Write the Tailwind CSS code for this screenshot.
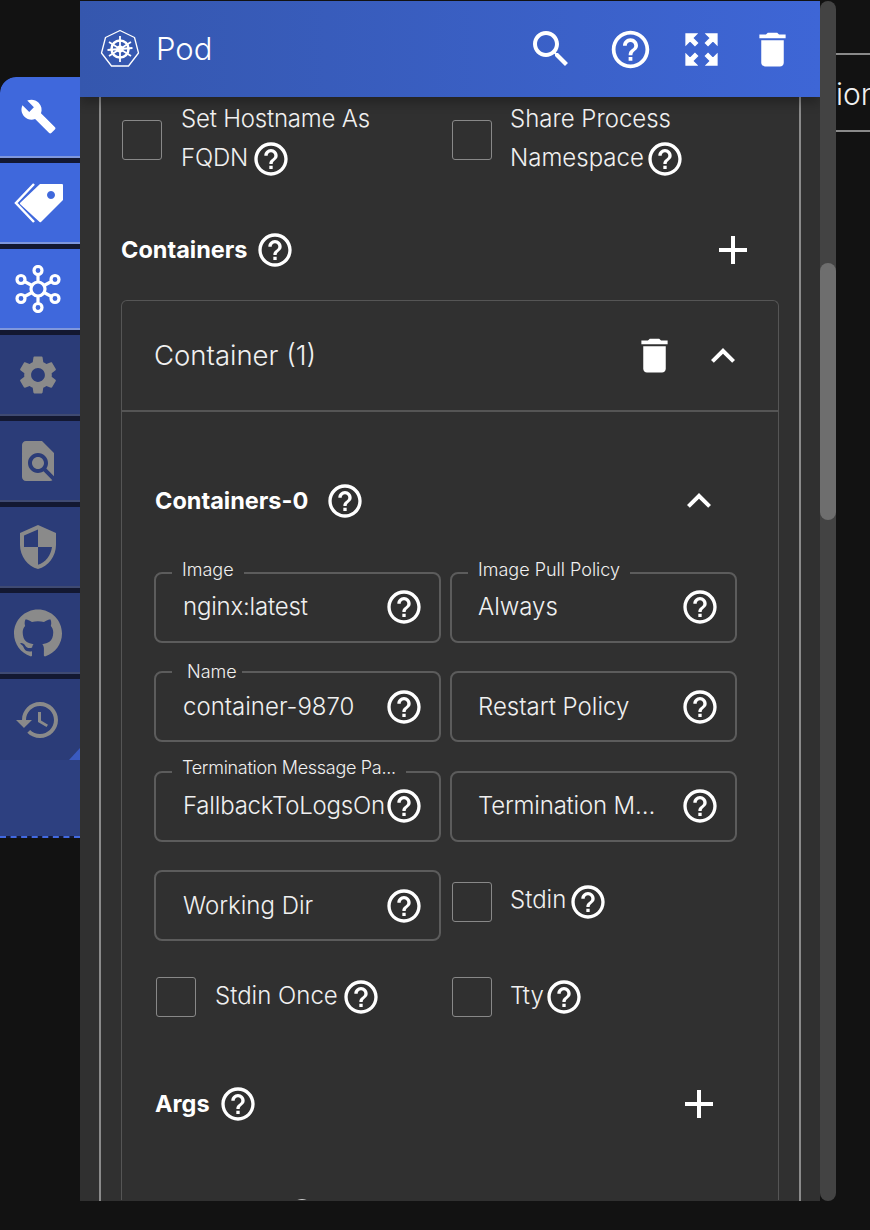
<!DOCTYPE html>
<html lang="en">
<head>
    <meta charset="UTF-8">
    <title>Pod</title>
    <script src="https://cdn.jsdelivr.net/npm/@tailwindcss/browser@4"></script>
</head>
<body class="bg-[#121212] font-['Inter',sans-serif] text-[#f0f0f0] overflow-hidden">
    <!-- shared icons -->
    <svg class="hidden" aria-hidden="true">
        <symbol id="i-help" viewBox="0 0 24 24"><path d="M11 18h2v-2h-2v2zm1-16C6.48 2 2 6.48 2 12s4.48 10 10 10 10-4.48 10-10S17.52 2 12 2zm0 18c-4.41 0-8-3.59-8-8s3.59-8 8-8 8 3.59 8 8-3.59 8-8 8zm0-14c-2.21 0-4 1.79-4 4h2c0-1.1.9-2 2-2s2 .9 2 2c0 2-3 1.75-3 5h2c0-2.25 3-2.5 3-5 0-2.21-1.79-4-4-4z"/></symbol>
        <symbol id="i-trash" viewBox="0 0 24 24"><path d="M6 19c0 1.1.9 2 2 2h8c1.1 0 2-.9 2-2V7H6v12zM19 4h-3.5l-1-1h-5l-1 1H5v2h14V4z"/></symbol>
        <symbol id="i-plus" viewBox="0 0 24 24"><path d="M19 13h-6v6h-2v-6H5v-2h6V5h2v6h6v2z"/></symbol>
        <symbol id="i-up" viewBox="0 0 24 24"><path d="M12 8l-6 6 1.41 1.41L12 10.83l4.59 4.58L18 14z"/></symbol>
    </svg>

    <div class="flex h-[1230px] w-[870px]">
        <!-- Side tabs -->
        <nav class="w-[80px] shrink-0 mt-[77px] h-[761px] flex flex-col bg-[#131831] rounded-tl-[16px] overflow-hidden border-b-2 border-dashed border-[#4169e1]">
            <div class="h-[81px] mb-[5px] bg-[#3f68dc] border-b-2 border-[#7f97dc] flex items-center justify-center pr-[4px] rounded-tl-[16px]">
                <svg class="w-[37px] h-[37px] fill-white" viewBox="0 0 24 24"><path d="M22.7 19l-9.1-9.1c.9-2.3.4-5-1.5-6.9-2-2-5-2.4-7.4-1.3L9 6 6 9 1.6 4.7C.4 7.1.9 10.1 2.9 12.1c1.9 1.9 4.6 2.4 6.9 1.5l9.1 9.1c.4.4 1 .4 1.4 0l2.3-2.3c.5-.4.5-1.1.1-1.4z"/></svg>
            </div>
            <div class="h-[81px] mb-[5px] bg-[#3f68dc] border-b-2 border-[#7f97dc] flex items-center justify-center pr-[2px]">
                <svg class="w-[50px] h-[40px]" viewBox="0 0 50 40"><path fill="#fff" fill-rule="evenodd" d="M26 1H48a1 1 0 0 1 1 1V17L27 39a1 1 0 0 1-1.400 0L6 21V20zM37 8a4 4 0 1 0 .01 0z"/><path fill="none" stroke="#fff" stroke-width="2.500" d="M20 1L2 20L20 39"/></svg>
            </div>
            <div class="h-[81px] mb-[5px] bg-[#3f68dc] border-b-2 border-[#7f97dc] flex items-center justify-center pr-[4px]">
                <svg class="w-[46px] h-[48px]" viewBox="0 0 46 48" fill="none" stroke="#fff" stroke-width="3.200"><circle cx="23" cy="24" r="7"/><circle cx="23" cy="5.500" r="4"/><circle cx="23" cy="42.500" r="4"/><circle cx="6" cy="14.500" r="4"/><circle cx="40" cy="14.500" r="4"/><circle cx="6" cy="33.500" r="4"/><circle cx="40" cy="33.500" r="4"/><path d="M23 9.500V17M23 31v7.500M9.500 16.500L17 20.500M36.500 16.500L29 20.500M9.500 31.500L17 27.500M36.500 31.500L29 27.500"/></svg>
            </div>
            <div class="h-[81px] mb-[5px] bg-[#2b3c78] border-b-2 border-[#3f4a72] flex items-center justify-center pr-[4px]">
                <svg class="w-[46px] h-[46px] fill-[#8a8a8a]" viewBox="0 0 24 24"><path d="M19.140 12.940c.04-.3.06-.61.06-.94 0-.32-.02-.64-.07-.94l2.030-1.580c.18-.14.23-.41.12-.61l-1.920-3.320c-.12-.22-.37-.29-.59-.22l-2.390.96c-.5-.38-1.030-.7-1.620-.94l-.36-2.540c-.04-.24-.24-.41-.48-.41h-3.840c-.24 0-.43.17-.47.41l-.36 2.540c-.59.24-1.130.57-1.620.94l-2.390-.96c-.22-.08-.47 0-.59.22L2.740 8.870c-.12.21-.08.47.12.61l2.030 1.580c-.05.3-.09.63-.09.94s.02.64.07.94l-2.030 1.580c-.18.14-.23.41-.12.61l1.920 3.320c.12.22.37.29.59.22l2.390-.96c.5.38 1.030.7 1.620.94l.36 2.540c.05.24.24.41.48.41h3.840c.24 0 .44-.17.47-.41l.36-2.540c.59-.24 1.130-.56 1.620-.94l2.390.96c.22.08.47 0 .59-.22l1.920-3.320c.12-.22.07-.47-.12-.61l-2.010-1.580zM12 15.600c-1.980 0-3.600-1.620-3.600-3.600s1.620-3.600 3.600-3.600 3.600 1.620 3.600 3.600-1.620 3.600-3.600 3.600z"/></svg>
            </div>
            <div class="h-[81px] mb-[5px] bg-[#2b3c78] border-b-2 border-[#3f4a72] flex items-center justify-center pr-[4px]">
                <svg class="w-[48px] h-[48px] fill-[#8a8a8a]" viewBox="0 0 24 24"><path d="M20 19.590V8l-6-6H6c-1.100 0-1.990.9-1.990 2L4 20c0 1.100.89 2 1.990 2H18c.45 0 .85-.15 1.190-.4l-4.430-4.430c-.8.52-1.740.83-2.760.83-2.760 0-5-2.240-5-5s2.240-5 5-5 5 2.240 5 5c0 1.020-.31 1.960-.83 2.750L20 19.590zM9 13c0 1.660 1.340 3 3 3s3-1.340 3-3-1.340-3-3-3-3 1.340-3 3z"/></svg>
            </div>
            <div class="h-[81px] mb-[5px] bg-[#2b3c78] border-b-2 border-[#3f4a72] flex items-center justify-center pr-[4px]">
                <svg class="w-[48px] h-[48px] fill-[#8a8a8a]" viewBox="0 0 24 24"><path d="M12 1L3 5v6c0 5.550 3.840 10.740 9 12 5.160-1.260 9-6.450 9-12V5l-9-4zm0 10.990h7c-.53 4.120-3.280 7.790-7 8.940V12H5V6.300l7-3.110v8.800z"/></svg>
            </div>
            <div class="h-[81px] mb-[5px] bg-[#2b3c78] border-b-2 border-[#3f4a72] flex items-center justify-center pr-[4px]">
                <svg class="w-[48px] h-[48px] fill-[#8a8a8a]" viewBox="0 0 24 24"><path d="M12 .297c-6.630 0-12 5.373-12 12 0 5.303 3.438 9.800 8.205 11.385.6.113.82-.258.82-.577 0-.285-.01-1.040-.015-2.040-3.338.724-4.042-1.610-4.042-1.610C4.422 18.070 3.633 17.700 3.633 17.700c-1.087-.744.084-.729.084-.729 1.205.084 1.838 1.236 1.838 1.236 1.070 1.835 2.809 1.305 3.495.998.108-.776.417-1.305.76-1.605-2.665-.3-5.466-1.332-5.466-5.930 0-1.310.465-2.380 1.235-3.220-.135-.303-.54-1.523.105-3.176 0 0 1.005-.322 3.300 1.230.96-.267 1.980-.399 3-.405 1.020.006 2.040.138 3 .405 2.280-1.552 3.285-1.230 3.285-1.230.645 1.653.24 2.873.12 3.176.765.84 1.230 1.910 1.230 3.220 0 4.610-2.805 5.625-5.475 5.920.42.36.81 1.096.81 2.220 0 1.606-.015 2.896-.015 3.286 0 .315.21.69.825.57C20.565 22.092 24 17.592 24 12.297c0-6.627-5.373-12-12-12"/></svg>
            </div>
            <div class="relative h-[81px] bg-[#2b3c78] flex items-center justify-center pr-[4px]">
                <svg class="w-[48px] h-[48px] fill-[#8a8a8a]" viewBox="0 0 24 24"><path d="M13 3c-4.970 0-9 4.030-9 9H1l3.890 3.890.07.14L9 12H6c0-3.870 3.130-7 7-7s7 3.130 7 7-3.130 7-7 7c-1.930 0-3.680-.79-4.940-2.060l-1.420 1.420C8.270 19.990 10.510 21 13 21c4.970 0 9-4.030 9-9s-4.030-9-9-9zm-1 5v5l4.280 2.540.72-1.210-3.500-2.080V8H12z"/></svg>
                <span class="absolute right-0 bottom-0 w-[11px] h-[12px] bg-[#3a5ac0] [clip-path:polygon(100%_0,100%_100%,0_100%)]"></span>
            </div>
            <div class="flex-1 bg-[#2d4080]"></div>
        </nav>

        <!-- Panel -->
        <div class="relative w-[740px] shrink-0 mt-px h-[1200px] bg-[#303030] overflow-hidden">
            <header class="relative z-10 h-[96px] flex items-center pl-[20px] pr-[25px] bg-gradient-to-r from-[#3557ae] to-[#3e66d6] shadow-[0_6px_10px_rgba(0,0,0,0.25)]">
                <svg class="w-[40px] h-[40px]" viewBox="0 0 40 40" fill="none" stroke="#fff">
                    <path stroke-width="1.300" stroke-linejoin="round" d="M20 1.500L34.500 8.500L38.500 24L28.500 37H11.500L1.500 24L5.500 8.500z"/>
                    <circle cx="20" cy="20" r="8.500" stroke-width="2.500"/>
                    <circle cx="20" cy="20" r="2.500" stroke-width="2"/>
                    <path stroke-width="1.800" d="M20 7V33M9 13L31 27M31 13L9 27M7.500 21L32.500 19"/>
                </svg>
                <span class="ml-[16px] text-[31px] font-light text-white">Pod</span>
                <div class="ml-auto flex items-center">
                    <svg class="w-[48px] h-[48px] fill-white" viewBox="0 0 24 24"><path d="M15.500 14h-.79l-.28-.27C15.410 12.590 16 11.110 16 9.500 16 5.910 13.090 3 9.500 3S3 5.910 3 9.500 5.910 16 9.500 16c1.610 0 3.090-.59 4.230-1.570l.27.28v.79l5 4.990L20.490 19l-4.990-5zm-6 0C7.010 14 5 11.990 5 9.500S7.010 5 9.500 5 14 7.010 14 9.500 11.990 14 9.500 14z"/></svg>
                    <svg class="w-[45px] h-[45px] fill-white ml-[33px]"><use href="#i-help"/></svg>
                    <svg class="w-[41px] h-[41px] fill-white stroke-white stroke-[0.9] ml-[28px]" viewBox="0 0 24 24"><path d="M15 3l2.300 2.300-2.890 2.870 1.420 1.420L18.700 6.700 21 9V3h-6zM3 9l2.300-2.300 2.870 2.890 1.420-1.420L6.700 5.300 9 3H3v6zm6 12l-2.300-2.300 2.890-2.870-1.420-1.420L5.300 17.300 3 15v6h6zm12-6l-2.300 2.300-2.870-2.890-1.420 1.420 2.890 2.870L15 21h6v-6z"/></svg>
                    <svg class="w-[45px] h-[45px] fill-white ml-[28px]"><use href="#i-trash"/></svg>
                </div>
            </header>

            <main class="mx-[19px] border-x-2 border-[#8a8a8a] px-[20px] h-[1104px] overflow-hidden">
                <div class="flex h-[84px] items-center">
                    <div class="flex items-center w-[330px] pl-px">
                        <span class="w-[40px] h-[40px] mt-[1px] border border-[#888] rounded-[3px]"></span>
                        <div class="ml-[19px] mt-[-2px] text-[24px] tracking-[-0.2px] font-light leading-[39px]">
                            <div>Set Hostname As</div>
                            <div class="flex items-center h-[39px]">FQDN<svg class="w-[40px] h-[40px] fill-white ml-[3px] mt-[2px]"><use href="#i-help"/></svg></div>
                        </div>
                    </div>
                    <div class="flex items-center pl-px">
                        <span class="w-[40px] h-[40px] mt-[1px] border border-[#888] rounded-[3px]"></span>
                        <div class="ml-[18px] mt-[-2px] text-[24px] font-light leading-[39px]">
                            <div>Share Process</div>
                            <div class="flex items-center h-[39px]">Namespace<svg class="w-[40px] h-[40px] fill-white ml-[1px] mt-[2px]"><use href="#i-help"/></svg></div>
                        </div>
                    </div>
                </div>

                <div class="flex items-center h-[48px] mt-[45px] pr-[22px]">
                    <span class="text-[23.5px] font-bold text-white">Containers</span>
                    <svg class="w-[40px] h-[40px] fill-white ml-[7px]"><use href="#i-help"/></svg>
                    <svg class="w-[48px] h-[48px] fill-white ml-auto"><use href="#i-plus"/></svg>
                </div>

                <section class="mt-[26px] border border-[#555] rounded-t-[6px] border-b-0 h-[900px] overflow-hidden">
                    <div class="h-[111px] border-b-2 border-[#555] flex items-center pl-[32px] pr-[31px]">
                        <span class="mt-px text-[27.5px] font-light">Container (1)</span>
                        <svg class="w-[45px] h-[45px] fill-white ml-auto"><use href="#i-trash"/></svg>
                        <svg class="w-[48px] h-[48px] fill-white ml-[22px]"><use href="#i-up"/></svg>
                    </div>

                    <div class="pl-[32px] pr-[41px]">
                        <div class="flex items-center h-[48px] mt-[65px] ml-px">
                            <span class="text-[23.5px] font-bold text-white">Containers-0</span>
                            <svg class="w-[40px] h-[40px] fill-white ml-[17px]"><use href="#i-help"/></svg>
                            <svg class="w-[48px] h-[48px] fill-white ml-auto mr-[14px]"><use href="#i-up"/></svg>
                        </div>

                        <div class="grid grid-cols-[287px_287px] gap-x-[9px] gap-y-[28.5px] auto-rows-[71px] mt-[46.5px]">
                            <div class="relative border-2 border-[#5c5c5c] rounded-[8px] flex items-center pl-[27px] pr-[15px]">
                                <label class="absolute left-[16px] top-[-16px] px-[10px] bg-[#303030] text-[18px] font-light leading-[24px]">Image</label>
                                <span class="flex-1 overflow-hidden whitespace-nowrap text-[24px] tracking-[-0.2px] font-light">nginx:latest</span>
                                <svg class="w-[40px] h-[40px] fill-white"><use href="#i-help"/></svg>
                            </div>
                            <div class="relative border-2 border-[#5c5c5c] rounded-[8px] flex items-center pl-[26px] pr-[15px]">
                                <label class="absolute left-[16px] top-[-16px] px-[10px] bg-[#303030] text-[18px] font-light leading-[24px]">Image Pull Policy</label>
                                <span class="flex-1 overflow-hidden whitespace-nowrap text-[24px] font-light">Always</span>
                                <svg class="w-[40px] h-[40px] fill-white"><use href="#i-help"/></svg>
                            </div>
                            <div class="relative border-2 border-[#5c5c5c] rounded-[8px] flex items-center pl-[27px] pr-[15px]">
                                <label class="absolute left-[16px] top-[-13px] pl-[15px] pr-[5px] bg-[#303030] text-[18px] font-light leading-[24px]">Name</label>
                                <span class="flex-1 overflow-hidden whitespace-nowrap text-[24px] font-light">container-9870</span>
                                <svg class="w-[40px] h-[40px] fill-white"><use href="#i-help"/></svg>
                            </div>
                            <div class="border-2 border-[#5c5c5c] rounded-[8px] flex items-center pl-[26px] pr-[15px]">
                                <span class="flex-1 overflow-hidden whitespace-nowrap text-[24px] font-light">Restart Policy</span>
                                <svg class="w-[40px] h-[40px] fill-white"><use href="#i-help"/></svg>
                            </div>
                            <div class="relative border-2 border-[#5c5c5c] rounded-[8px] flex items-center pl-[27px] pr-[15px]">
                                <label class="absolute left-[16px] top-[-17px] px-[10px] bg-[#303030] text-[18px] tracking-[-0.3px] font-light leading-[24px] whitespace-nowrap">Termination Message Pa...</label>
                                <span class="flex-1 min-w-0 overflow-hidden whitespace-nowrap text-[24px] tracking-[-0.2px] font-light">FallbackToLogsOnError</span>
                                <svg class="w-[40px] h-[40px] fill-white shrink-0"><use href="#i-help"/></svg>
                            </div>
                            <div class="border-2 border-[#5c5c5c] rounded-[8px] flex items-center pl-[26px] pr-[15px]">
                                <span class="flex-1 min-w-0 mr-[16px] overflow-hidden whitespace-nowrap text-ellipsis text-[24px] tracking-[-0.2px] font-light">Termination Message Policy</span>
                                <svg class="w-[40px] h-[40px] fill-white shrink-0"><use href="#i-help"/></svg>
                            </div>
                            <div class="border-2 border-[#5c5c5c] rounded-[8px] flex items-center pl-[27px] pr-[15px]">
                                <span class="flex-1 overflow-hidden whitespace-nowrap text-[24px] font-light">Working Dir</span>
                                <svg class="w-[40px] h-[40px] fill-white"><use href="#i-help"/></svg>
                            </div>
                            <div class="flex items-center pl-[2px] text-[24px] font-light">
                                <span class="w-[40px] h-[40px] mt-[-8px] border border-[#888] rounded-[3px]"></span>
                                <span class="ml-[18px] mt-[-12px]">Stdin</span>
                                <svg class="w-[40px] h-[40px] fill-white ml-[2px] mt-[-8px]"><use href="#i-help"/></svg>
                            </div>
                        </div>

                        <div class="grid grid-cols-[287px_287px] gap-x-[9px] mt-[32px] text-[24px] font-light">
                            <div class="flex items-center pl-[2px] h-[48px]">
                                <span class="w-[40px] h-[40px] border border-[#888] rounded-[3px]"></span>
                                <span class="ml-[19px] mt-[-3px]">Stdin Once</span>
                                <svg class="w-[40px] h-[40px] fill-white ml-[3px]"><use href="#i-help"/></svg>
                            </div>
                            <div class="flex items-center pl-[2px] h-[48px]">
                                <span class="w-[40px] h-[40px] border border-[#888] rounded-[3px]"></span>
                                <span class="ml-[18px] mt-[-3px]">Tty</span>
                                <svg class="w-[40px] h-[40px] fill-white"><use href="#i-help"/></svg>
                            </div>
                        </div>

                        <div class="flex items-center h-[48px] mt-[59px] ml-px">
                            <span class="text-[23.5px] font-bold text-white">Args</span>
                            <svg class="w-[40px] h-[40px] fill-white ml-[8px]"><use href="#i-help"/></svg>
                            <svg class="w-[48px] h-[48px] fill-white ml-auto mr-[14px]"><use href="#i-plus"/></svg>
                        </div>

                        <div class="flex items-center h-[48px] mt-[64px] ml-px">
                            <span class="text-[23.5px] font-bold text-white">Command</span>
                            <svg class="w-[40px] h-[40px] fill-white ml-[9px]"><use href="#i-help"/></svg>
                        </div>
                    </div>
                </section>
            </main>
        </div>

        <!-- Scrollbar -->
        <div class="w-[16px] shrink-0 mt-px h-[1200px] rounded-b-[8px] rounded-t-[8px] bg-[#434343]">
            <div class="mt-[262px] h-[257px] rounded-[8px] bg-[#6e6e6e]"></div>
        </div>

        <!-- Page behind the panel -->
        <div class="w-[34px] h-[79px] mt-[53px] border-y-2 border-[#8a8a8a] overflow-hidden flex items-center">
            <span class="mt-[3px] text-[30px] font-light whitespace-nowrap">ion</span>
        </div>
    </div>
</body>
</html>
